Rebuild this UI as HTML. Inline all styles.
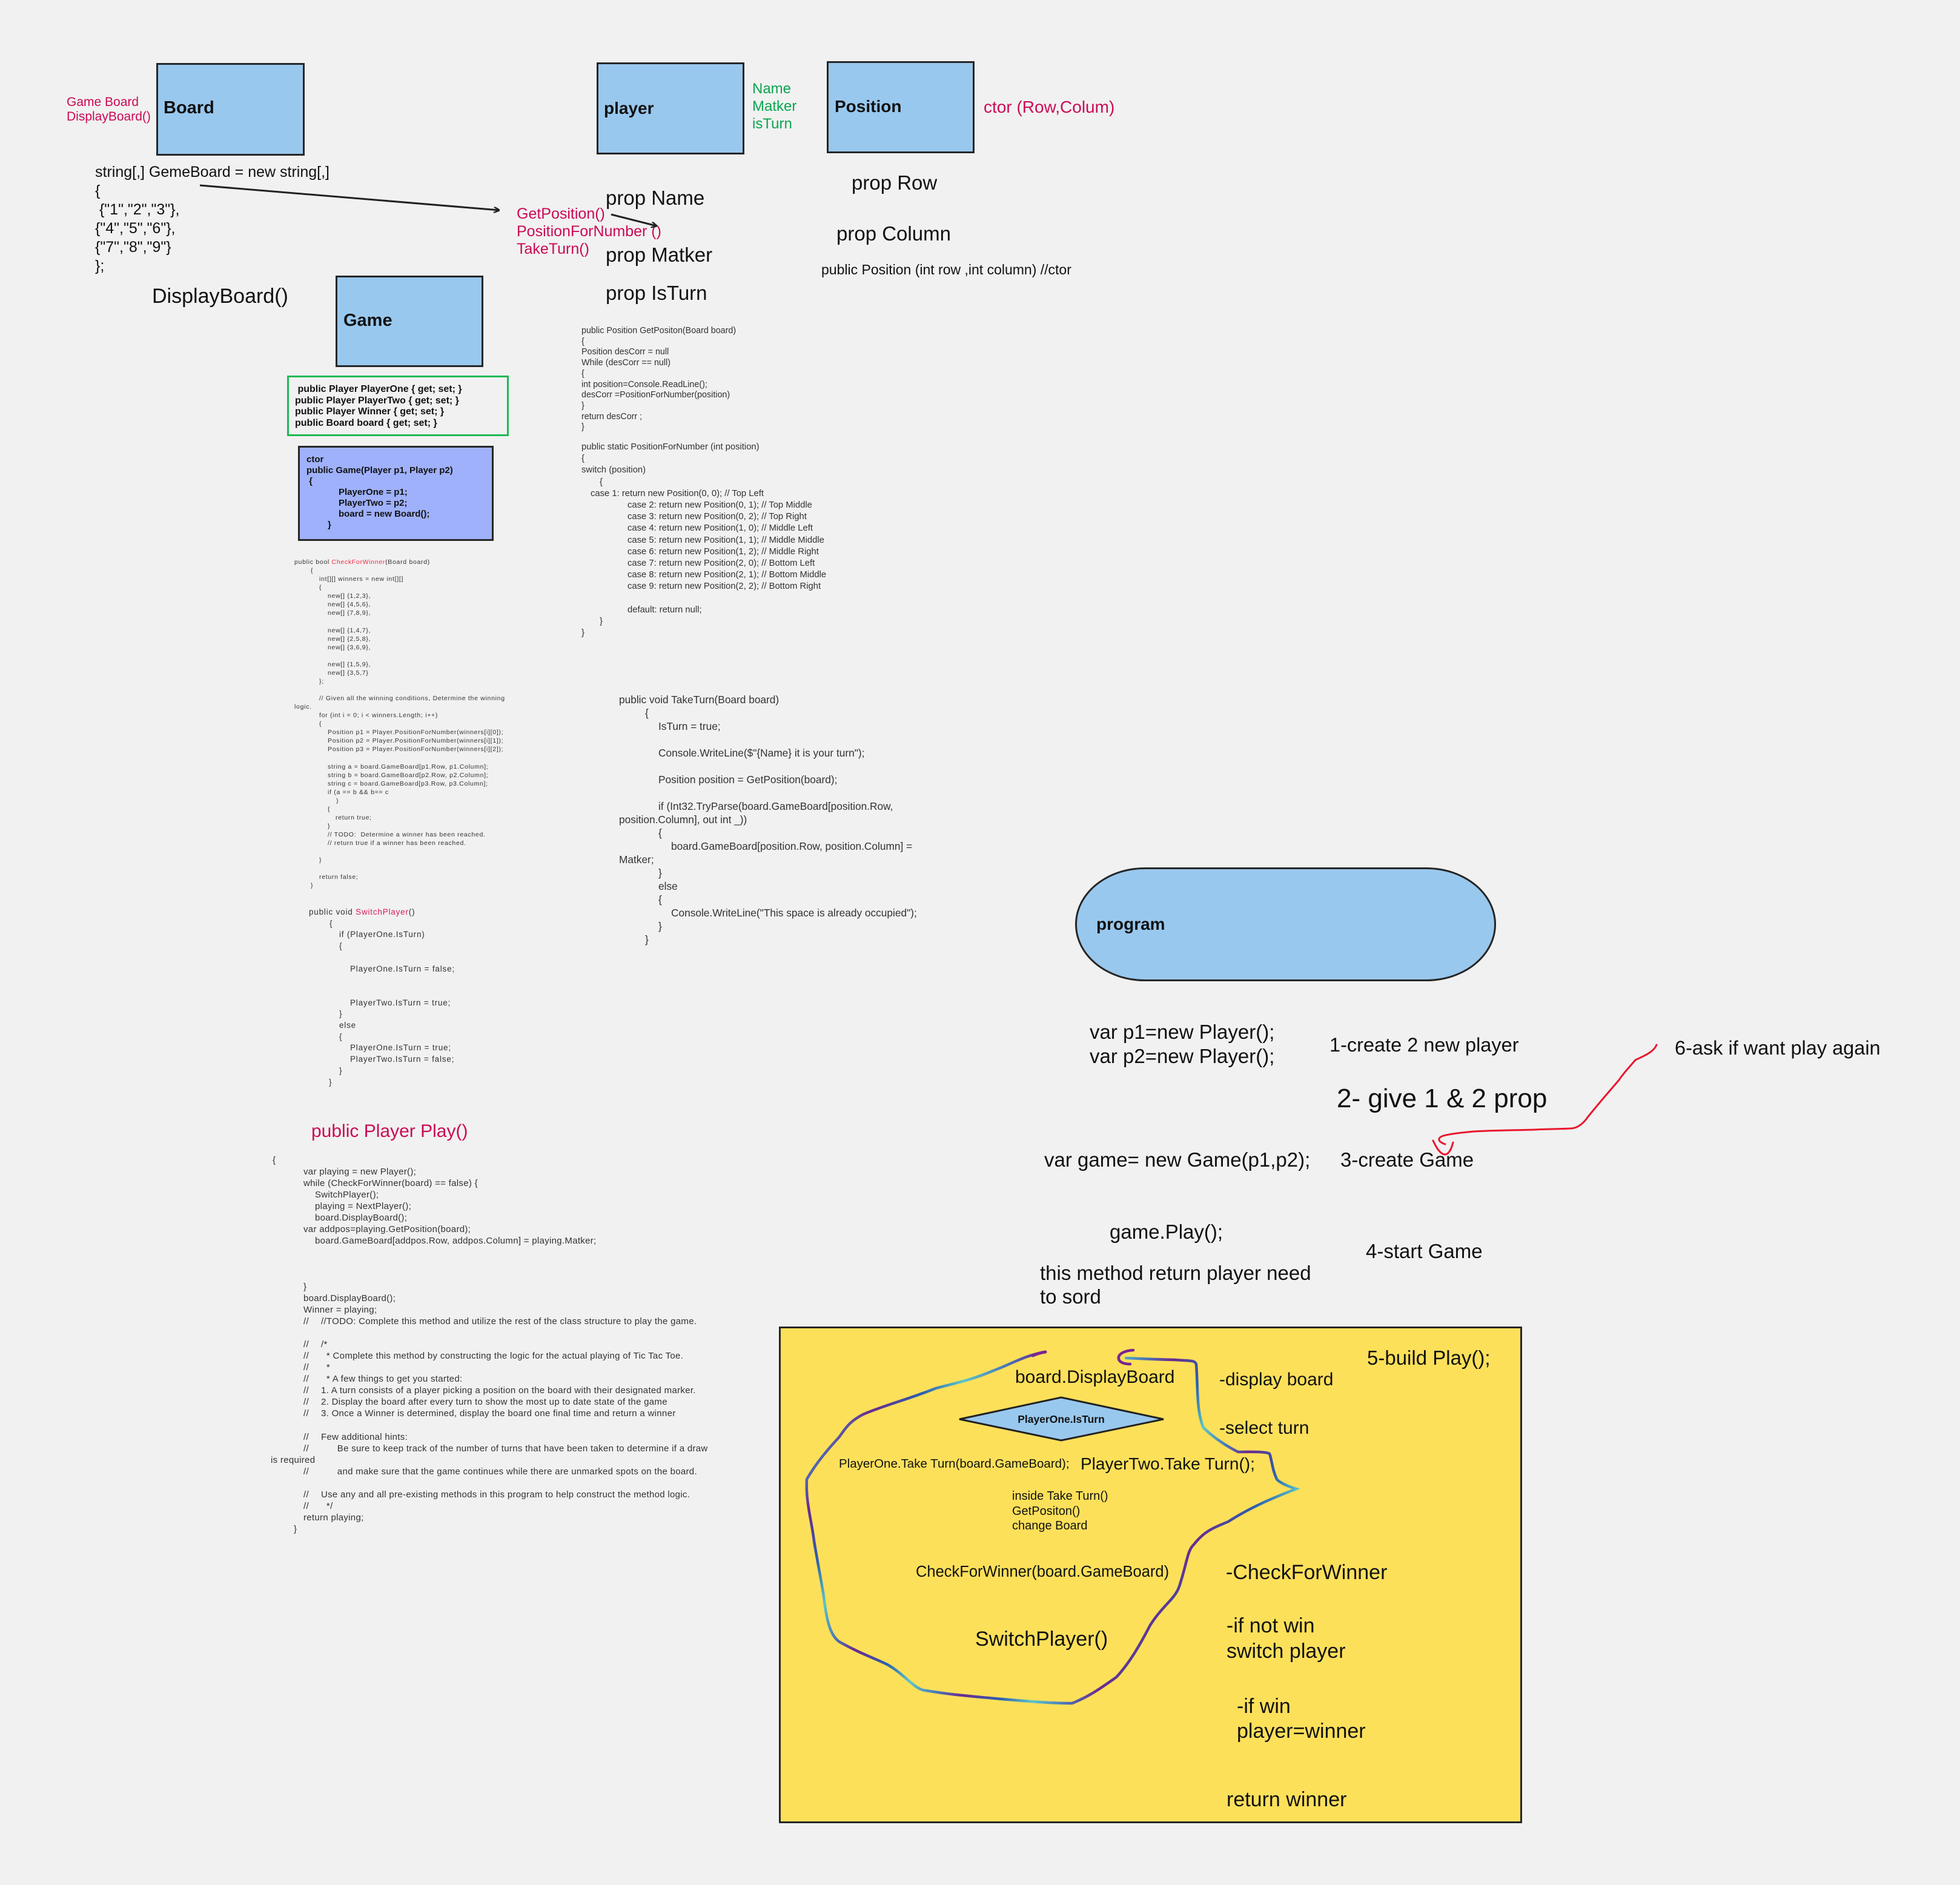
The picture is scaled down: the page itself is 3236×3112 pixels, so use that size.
<!DOCTYPE html>
<html><head><meta charset="utf-8">
<style>
html,body{margin:0;padding:0}
body{width:3236px;height:3112px;background:#f1f1f1;position:relative;overflow:hidden;font-family:"Liberation Sans",Arial,sans-serif;color:#111}
.t{position:absolute;white-space:pre;line-height:1}
.box{position:absolute;background:#99c8ee;border:3px solid #262626;box-sizing:border-box}
.blk{position:absolute;white-space:normal}
.blk div{white-space:pre}
.r{color:#cc0a55}
.g{color:#0aa550}
i.c{font-style:normal;display:inline-block;width:29px}
</style></head><body>

<!-- Board -->
<div class="t r" style="left:110px;top:158px;font-size:21px">Game Board</div>
<div class="t r" style="left:110px;top:182px;font-size:21px">DisplayBoard()</div>
<div class="box" style="left:258px;top:104px;width:245px;height:153px"></div>
<div class="t" style="left:270px;top:164px;font-size:29px;font-weight:bold">Board</div>
<div class="blk" style="left:157px;top:269px;font-size:25px;line-height:31px;color:#111"><div>string[,] GemeBoard = new string[,]</div><div>{</div><div> {"1","2","3"},</div><div>{"4","5","6"},</div><div>{"7","8","9"}</div><div>};</div></div>
<div class="t" style="left:251px;top:472px;font-size:34px">DisplayBoard()</div>

<!-- Game -->
<div class="box" style="left:554px;top:455px;width:244px;height:151px"></div>
<div class="t" style="left:567px;top:515px;font-size:29px;font-weight:bold">Game</div>
<div style="position:absolute;left:474px;top:620px;width:366px;height:100px;border:3px solid #1db955;box-sizing:border-box"></div>
<div class="blk" style="left:487px;top:634px;font-size:16px;line-height:18.5px;font-weight:bold;color:#111"><div> public Player PlayerOne { get; set; }</div><div>public Player PlayerTwo { get; set; }</div><div>public Player Winner { get; set; }</div><div>public Board board { get; set; }</div></div>
<div class="box" style="left:492px;top:736px;width:323px;height:157px;background:#9fb1fb"></div>
<div class="blk" style="left:506px;top:750px;font-size:15px;line-height:18px;font-weight:bold;color:#111"><div>ctor</div><div>public Game(Player p1, Player p2)</div><div> {</div><div style="padding-left:53px">PlayerOne = p1;</div><div style="padding-left:53px">PlayerTwo = p2;</div><div style="padding-left:53px">board = new Board();</div><div style="padding-left:35px">}</div></div>

<!-- CheckForWinner -->
<div class="blk" style="left:486px;top:921px;font-size:10.5px;line-height:14.07px;letter-spacing:.7px;color:#333">
<div>public bool <span style="color:#ee2a44">CheckForWinner</span>(Board board)</div>
<div style="padding-left:27px">{</div>
<div style="padding-left:41px">int[][] winners = new int[][]</div>
<div style="padding-left:41px">{</div>
<div style="padding-left:55px">new[] {1,2,3},</div>
<div style="padding-left:55px">new[] {4,5,6},</div>
<div style="padding-left:55px">new[] {7,8,9},</div>
<div>&nbsp;</div>
<div style="padding-left:55px">new[] {1,4,7},</div>
<div style="padding-left:55px">new[] {2,5,8},</div>
<div style="padding-left:55px">new[] {3,6,9},</div>
<div>&nbsp;</div>
<div style="padding-left:55px">new[] {1,5,9},</div>
<div style="padding-left:55px">new[] {3,5,7}</div>
<div style="padding-left:41px">};</div>
<div>&nbsp;</div>
<div style="padding-left:41px">// Given all the winning conditions, Determine the winning</div>
<div>logic.</div>
<div style="padding-left:41px">for (int i = 0; i &lt; winners.Length; i++)</div>
<div style="padding-left:41px">{</div>
<div style="padding-left:55px">Position p1 = Player.PositionForNumber(winners[i][0]);</div>
<div style="padding-left:55px">Position p2 = Player.PositionForNumber(winners[i][1]);</div>
<div style="padding-left:55px">Position p3 = Player.PositionForNumber(winners[i][2]);</div>
<div>&nbsp;</div>
<div style="padding-left:55px">string a = board.GameBoard[p1.Row, p1.Column];</div>
<div style="padding-left:55px">string b = board.GameBoard[p2.Row, p2.Column];</div>
<div style="padding-left:55px">string c = board.GameBoard[p3.Row, p3.Column];</div>
<div style="padding-left:55px">if (a == b &amp;&amp; b== c</div>
<div style="padding-left:69px">)</div>
<div style="padding-left:55px">{</div>
<div style="padding-left:68px">return true;</div>
<div style="padding-left:55px">}</div>
<div style="padding-left:55px">// TODO:  Determine a winner has been reached.</div>
<div style="padding-left:55px">// return true if a winner has been reached.</div>
<div>&nbsp;</div>
<div style="padding-left:41px">}</div>
<div>&nbsp;</div>
<div style="padding-left:41px">return false;</div>
<div style="padding-left:27px">}</div>
</div>

<!-- SwitchPlayer -->
<div class="blk" style="left:510px;top:1497px;font-size:13.5px;line-height:18.7px;letter-spacing:.8px;color:#333">
<div>public void <span style="color:#d81b60">SwitchPlayer</span>()</div>
<div style="padding-left:34px">{</div>
<div style="padding-left:50px">if (PlayerOne.IsTurn)</div>
<div style="padding-left:50px">{</div>
<div>&nbsp;</div>
<div style="padding-left:68px">PlayerOne.IsTurn = false;</div>
<div>&nbsp;</div>
<div>&nbsp;</div>
<div style="padding-left:68px">PlayerTwo.IsTurn = true;</div>
<div style="padding-left:50px">}</div>
<div style="padding-left:50px">else</div>
<div style="padding-left:50px">{</div>
<div style="padding-left:68px">PlayerOne.IsTurn = true;</div>
<div style="padding-left:68px">PlayerTwo.IsTurn = false;</div>
<div style="padding-left:50px">}</div>
<div style="padding-left:33px">}</div>
</div>

<!-- Play -->
<div class="t" style="left:514px;top:1853px;font-size:30px;color:#cc0a55">public Player Play()</div>
<div class="t" style="left:450px;top:1908px;font-size:15px;color:#333">{</div>
<div class="blk" style="left:501px;top:1924.5px;font-size:15px;line-height:19.05px;letter-spacing:.3px;color:#333">
<div>var playing = new Player();</div>
<div>while (CheckForWinner(board) == false) {</div>
<div style="padding-left:19px">SwitchPlayer();</div>
<div style="padding-left:19px">playing = NextPlayer();</div>
<div style="padding-left:19px">board.DisplayBoard();</div>
<div>var addpos=playing.GetPosition(board);</div>
<div style="padding-left:19px">board.GameBoard[addpos.Row, addpos.Column] = playing.Matker;</div>
<div>&nbsp;</div><div>&nbsp;</div><div>&nbsp;</div>
<div>}</div>
<div>board.DisplayBoard();</div>
<div>Winner = playing;</div>
<div><i class="c">//</i>//TODO: Complete this method and utilize the rest of the class structure to play the game.</div>
<div>&nbsp;</div>
<div><i class="c">//</i>/*</div>
<div><i class="c">//</i>  * Complete this method by constructing the logic for the actual playing of Tic Tac Toe.</div>
<div><i class="c">//</i>  *</div>
<div><i class="c">//</i>  * A few things to get you started:</div>
<div><i class="c">//</i>1. A turn consists of a player picking a position on the board with their designated marker.</div>
<div><i class="c">//</i>2. Display the board after every turn to show the most up to date state of the game</div>
<div><i class="c">//</i>3. Once a Winner is determined, display the board one final time and return a winner</div>
<div>&nbsp;</div>
<div><i class="c">//</i>Few additional hints:</div>
<div><i class="c">//</i>      Be sure to keep track of the number of turns that have been taken to determine if a draw</div>
<div style="margin-left:-54px">is required</div>
<div><i class="c">//</i>      and make sure that the game continues while there are unmarked spots on the board.</div>
<div>&nbsp;</div>
<div><i class="c">//</i>Use any and all pre-existing methods in this program to help construct the method logic.</div>
<div><i class="c">//</i>  */</div>
<div>return playing;</div>
<div style="margin-left:-16px">}</div>
</div>

<!-- Player -->
<div class="box" style="left:985px;top:103px;width:244px;height:152px"></div>
<div class="t" style="left:997px;top:165px;font-size:28px;font-weight:bold">player</div>
<div class="blk g" style="left:1242px;top:132px;font-size:24px;line-height:29px"><div>Name</div><div>Matker</div><div>isTurn</div></div>
<div class="t" style="left:1000px;top:310px;font-size:33px">prop Name</div>
<div class="t" style="left:1000px;top:404px;font-size:33px">prop Matker</div>
<div class="t" style="left:1000px;top:467px;font-size:33px">prop IsTurn</div>
<div class="blk r" style="left:853px;top:339px;font-size:25px;line-height:29px"><div>GetPosition()</div><div>PositionForNumber ()</div><div>TakeTurn()</div></div>

<!-- Position -->
<div class="box" style="left:1365px;top:101px;width:244px;height:152px"></div>
<div class="t" style="left:1378px;top:162px;font-size:28px;font-weight:bold">Position</div>
<div class="t r" style="left:1624px;top:163px;font-size:28px">ctor (Row,Colum)</div>
<div class="t" style="left:1406px;top:285px;font-size:33px">prop Row</div>
<div class="t" style="left:1381px;top:369px;font-size:33px">prop Column</div>
<div class="t" style="left:1356px;top:434px;font-size:23px">public Position (int row ,int column) //ctor</div>

<!-- GetPositon -->
<div class="blk" style="left:960px;top:538px;font-size:14.3px;line-height:17.7px;color:#333">
<div>public Position GetPositon(Board board)</div><div>{</div><div>Position desCorr = null</div><div>While (desCorr == null)</div><div>{</div><div>int position=Console.ReadLine();</div><div>desCorr =PositionForNumber(position)</div><div>}</div><div>return desCorr ;</div><div>}</div>
</div>
<div class="blk" style="left:960px;top:729px;font-size:14.8px;line-height:19.2px;color:#333">
<div>public static PositionForNumber (int position)</div>
<div>{</div>
<div>switch (position)</div>
<div style="padding-left:30px">{</div>
<div style="padding-left:15px">case 1: return new Position(0, 0); // Top Left</div>
<div style="padding-left:76px">case 2: return new Position(0, 1); // Top Middle</div>
<div style="padding-left:76px">case 3: return new Position(0, 2); // Top Right</div>
<div style="padding-left:76px">case 4: return new Position(1, 0); // Middle Left</div>
<div style="padding-left:76px">case 5: return new Position(1, 1); // Middle Middle</div>
<div style="padding-left:76px">case 6: return new Position(1, 2); // Middle Right</div>
<div style="padding-left:76px">case 7: return new Position(2, 0); // Bottom Left</div>
<div style="padding-left:76px">case 8: return new Position(2, 1); // Bottom Middle</div>
<div style="padding-left:76px">case 9: return new Position(2, 2); // Bottom Right</div>
<div>&nbsp;</div>
<div style="padding-left:76px">default: return null;</div>
<div style="padding-left:30px">}</div>
<div>}</div>
</div>

<!-- TakeTurn -->
<div class="blk" style="left:1022px;top:1144px;font-size:17.3px;line-height:22px;color:#333">
<div>public void TakeTurn(Board board)</div>
<div style="padding-left:43px">{</div>
<div style="padding-left:65px">IsTurn = true;</div>
<div>&nbsp;</div>
<div style="padding-left:65px">Console.WriteLine($"{Name} it is your turn");</div>
<div>&nbsp;</div>
<div style="padding-left:65px">Position position = GetPosition(board);</div>
<div>&nbsp;</div>
<div style="padding-left:65px">if (Int32.TryParse(board.GameBoard[position.Row,</div>
<div>position.Column], out int _))</div>
<div style="padding-left:65px">{</div>
<div style="padding-left:86px">board.GameBoard[position.Row, position.Column] =</div>
<div>Matker;</div>
<div style="padding-left:65px">}</div>
<div style="padding-left:65px">else</div>
<div style="padding-left:65px">{</div>
<div style="padding-left:86px">Console.WriteLine("This space is already occupied");</div>
<div style="padding-left:65px">}</div>
<div style="padding-left:43px">}</div>
</div>

<!-- Program -->
<div style="position:absolute;left:1775px;top:1432px;width:695px;height:188px;background:#99c8ee;border:3px solid #262626;box-sizing:border-box;border-radius:115px/94px"></div>
<div class="t" style="left:1810px;top:1512px;font-size:28px;font-weight:bold">program</div>
<div class="t" style="left:1799px;top:1687px;font-size:33px">var p1=new Player();</div>
<div class="t" style="left:1799px;top:1727px;font-size:33px">var p2=new Player();</div>
<div class="t" style="left:2195px;top:1709px;font-size:32.5px">1-create 2 new player</div>
<div class="t" style="left:2765px;top:1714px;font-size:32.5px">6-ask if want play again</div>
<div class="t" style="left:2207px;top:1792px;font-size:44px">2- give 1 &amp; 2 prop</div>
<div class="t" style="left:1724px;top:1898px;font-size:33px">var game= new Game(p1,p2);</div>
<div class="t" style="left:2213px;top:1898px;font-size:33px">3-create Game</div>
<div class="t" style="left:1832px;top:2017px;font-size:33px">game.Play();</div>
<div class="t" style="left:2255px;top:2049px;font-size:33px">4-start Game</div>
<div class="t" style="left:1717px;top:2085px;font-size:33px">this method return player need</div>
<div class="t" style="left:1717px;top:2124px;font-size:33px">to sord</div>

<!-- Yellow panel -->
<div style="position:absolute;left:1286px;top:2190px;width:1227px;height:820px;background:#fde05a;border:3px solid #262626;box-sizing:border-box"></div>
<div class="t" style="left:2257px;top:2225px;font-size:33px">5-build Play();</div>
<div class="t" style="left:1676px;top:2259px;font-size:30px">board.DisplayBoard</div>
<div class="t" style="left:2013px;top:2263px;font-size:30px">-display board</div>
<div class="t" style="left:2013px;top:2343px;font-size:30px">-select turn</div>
<div class="t" style="left:1385px;top:2407px;font-size:20.5px">PlayerOne.Take Turn(board.GameBoard);</div>
<div class="t" style="left:1784px;top:2403px;font-size:28px">PlayerTwo.Take Turn();</div>
<div class="blk" style="left:1671px;top:2458px;font-size:20px;line-height:24.5px"><div>inside Take Turn()</div><div>GetPositon()</div><div>change Board</div></div>
<div class="t" style="left:1512px;top:2583px;font-size:25.5px">CheckForWinner(board.GameBoard)</div>
<div class="t" style="left:2024px;top:2579px;font-size:34px">-CheckForWinner</div>
<div class="t" style="left:1610px;top:2689px;font-size:34px">SwitchPlayer()</div>
<div class="t" style="left:2025px;top:2667px;font-size:34px">-if not win</div>
<div class="t" style="left:2025px;top:2709px;font-size:34px">switch player</div>
<div class="t" style="left:2042px;top:2800px;font-size:34px">-if win</div>
<div class="t" style="left:2042px;top:2841px;font-size:34px">player=winner</div>
<div class="t" style="left:2025px;top:2954px;font-size:34px">return winner</div>

<svg style="position:absolute;left:0;top:0" width="3236" height="3112" viewBox="0 0 3236 3112">
<defs>
<linearGradient id="sq" gradientUnits="userSpaceOnUse" x1="0" y1="0" x2="160" y2="100" spreadMethod="repeat">
<stop offset="0" stop-color="#6b2a8e"/><stop offset=".3" stop-color="#2d5fae"/><stop offset=".55" stop-color="#5cc6c9"/><stop offset=".8" stop-color="#4a76b8"/><stop offset="1" stop-color="#6b2a8e"/>
</linearGradient>
<marker id="ah" markerWidth="10" markerHeight="10" refX="9" refY="5" orient="auto" markerUnits="userSpaceOnUse"><path d="M0,0 L10,5 L0,10" fill="none" stroke="#222" stroke-width="2.5"/></marker>
</defs>
<line x1="330" y1="306" x2="824" y2="347" stroke="#222" stroke-width="3" marker-end="url(#ah)"/>
<line x1="1009" y1="354" x2="1084" y2="373" stroke="#222" stroke-width="3" marker-end="url(#ah)"/>
<polygon points="1584,2343 1752,2307 1921,2343 1752,2378" fill="#99c8ee" stroke="#222" stroke-width="3"/>
<text x="1752" y="2349" text-anchor="middle" font-family="Liberation Sans" font-weight="bold" font-size="17.5" fill="#111">PlayerOne.IsTurn</text>
<path d="M1726,2232 C1690,2238 1670,2252 1642,2262 C1600,2280 1570,2285 1545,2292 C1500,2310 1460,2320 1425,2335 C1400,2348 1395,2360 1385,2373 C1360,2400 1345,2420 1332,2442 C1330,2480 1340,2510 1344,2544 C1350,2580 1356,2610 1360,2635 C1365,2680 1372,2700 1385,2710 C1420,2730 1445,2738 1465,2748 C1495,2765 1510,2790 1529,2791 C1570,2798 1600,2800 1642,2804 C1690,2808 1730,2812 1770,2812 C1800,2800 1820,2785 1843,2769 C1870,2740 1890,2700 1899,2683 C1920,2650 1940,2640 1947,2619 C1960,2580 1960,2560 1971,2550 C1990,2525 2010,2520 2028,2512 C2070,2485 2110,2470 2140,2458 C2120,2452 2110,2445 2108,2442 C2100,2425 2100,2410 2096,2400 C2090,2396 2060,2397 2044,2397 C2020,2385 2000,2370 1987,2357 C1975,2330 1978,2290 1975,2252 C1972,2245 1965,2247 1940,2245 C1900,2244 1880,2243 1859,2242" fill="none" stroke="url(#sq)" stroke-width="4.5" stroke-linecap="round"/>
<path d="M1871,2229 C1855,2230 1845,2236 1847,2244 C1849,2250 1858,2252 1866,2252" fill="none" stroke="#7a2590" stroke-width="4.5" stroke-linecap="round"/>
<path d="M1726,2232 C1718,2233 1712,2235 1705,2238" fill="none" stroke="#7a2590" stroke-width="5" stroke-linecap="round"/>
<path d="M2735,1725 C2730,1738 2710,1745 2700,1750 C2690,1762 2680,1772 2673,1783 C2650,1810 2632,1830 2617,1850 C2608,1860 2600,1863 2593,1863 C2570,1864 2550,1864 2533,1865 C2500,1866 2470,1866 2433,1868 C2410,1870 2395,1872 2383,1875 C2374,1878 2372,1884 2386,1889" fill="none" stroke="#e8172d" stroke-width="3" stroke-linecap="round"/>
<path d="M2366,1883 C2372,1896 2378,1905 2385,1906 C2392,1906 2396,1898 2399,1886" fill="none" stroke="#e8172d" stroke-width="3" stroke-linecap="round"/>
</svg>
</body></html>
